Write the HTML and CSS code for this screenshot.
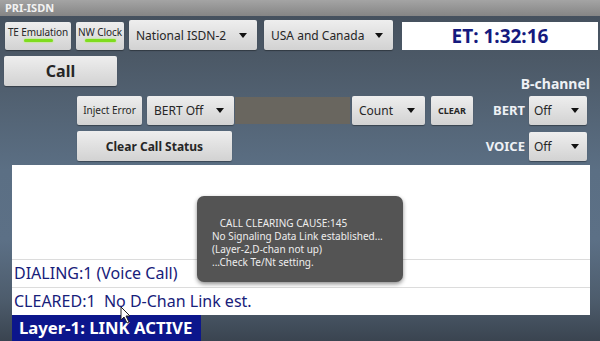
FILE: index.html
```html
<!DOCTYPE html>
<html>
<head>
<meta charset="utf-8">
<link rel="stylesheet" href="styles.css">
</head>
<body>
<div class="app">
  <div class="titlebar">PRI-ISDN</div>
  <div class="top-row">
    <div class="btn toggle te">TE Emulation<span class="led"></span></div>
    <div class="btn toggle nw">NW Clock<span class="led"></span></div>
    <div class="btn spinner national"><span>National ISDN-2</span><span class="arrow"></span></div>
    <div class="btn spinner usa"><span>USA and Canada</span><span class="arrow"></span></div>
    <div class="et">ET: 1:32:16</div>
  </div>
  <div class="call-row">
    <div class="btn call">Call</div>
    <div class="bchan">B-channel</div>
  </div>
  <div class="ctl-row r3">
    <div class="btn inject">Inject Error</div>
    <div class="btn spinner bert"><span>BERT Off</span><span class="arrow"></span></div>
    <div class="graybox"></div>
    <div class="btn spinner count"><span>Count</span><span class="arrow"></span></div>
    <div class="btn clear">CLEAR</div>
    <div class="label">BERT</div>
    <div class="btn spinner off"><span>Off</span><span class="arrow"></span></div>
  </div>
  <div class="ctl-row r4">
    <div class="btn ccs">Clear Call Status</div>
    <div class="label">VOICE</div>
    <div class="btn spinner off"><span>Off</span><span class="arrow"></span></div>
  </div>
  <div class="log">
    <div class="log-space"></div>
    <div class="log-line">DIALING:1 (Voice Call)</div>
    <div class="log-line">CLEARED:1&nbsp; No D-Chan Link est.</div>
  </div>
  <div class="banner">Layer-1: LINK ACTIVE</div>
  <div class="toast">&nbsp;&nbsp;&nbsp;CALL CLEARING CAUSE:145<br>No Signaling Data Link established...<br>(Layer-2,D-chan not up)<br>...Check Te/Nt setting.</div>
  <svg class="cursor" width="12" height="18" viewBox="0 0 12 18"><path d="M1 1 L1 14 L4 11 L7 17 L9 16 L6 10 L10 10 Z" fill="#fff" stroke="#222" stroke-width="1"/></svg>
</div>
</body>
</html>
```

FILE: styles.css
```css
html, body { margin: 0; padding: 0; }
.app {
  position: relative;
  width: 600px;
  height: 341px;
  overflow: hidden;
  font-family: "Noto Sans", "Open Sans", sans-serif;
  background: linear-gradient(to bottom, #434e5b 0px, #4c5967 60px, #5b6f84 170px, #5c7086 240px, #4d5c6c 300px, #3a4450 341px);
}
.titlebar {
  height: 16px;
  line-height: 16px;
  padding-left: 5px;
  font-size: 11px;
  font-weight: bold;
  color: #f2f2f2;
  background: linear-gradient(to bottom, #a4a4a4, #858585);
}
.btn {
  box-sizing: border-box;
  display: flex;
  align-items: center;
  justify-content: center;
  background: linear-gradient(to bottom, #eeeeee, #d2d2d2);
  border-radius: 2px;
  color: #262626;
  box-shadow: 0 1px 1px rgba(0,0,0,0.35);
  white-space: nowrap;
}
.spinner { justify-content: space-between; padding: 0 10px 0 7px; }
.arrow {
  width: 0; height: 0;
  border-left: 4px solid transparent;
  border-right: 4px solid transparent;
  border-top: 5px solid #111;
}
.top-row {
  display: flex;
  align-items: flex-end;
  height: 30px;
  padding: 4px 0 0 5px;
}
.toggle {
  position: relative;
  height: 28px;
  font-size: 10px;
  letter-spacing: -0.1px;
  padding-bottom: 8px;
}
.led {
  position: absolute;
  bottom: 8px;
  height: 3px;
  border-radius: 2px;
  background: #7fdc1e;
  box-shadow: 0 0 2px #9cff30;
}
.te { width: 66px; }
.te .led { left: 19px; width: 29px; }
.nw { width: 48px; margin-left: 5px; }
.nw .led { left: 9px; width: 31px; }
.national { width: 128px; height: 30px; margin-left: 5px; font-size: 12px; }
.usa { width: 129px; height: 30px; margin-left: 7px; font-size: 12px; }
.et {
  width: 196px;
  height: 28px;
  margin-left: 9px;
  background: #fff;
  color: #151a7e;
  font-weight: bold;
  font-size: 19px;
  line-height: 28px;
  text-align: center;
}
.call-row {
  display: flex;
  justify-content: space-between;
  align-items: flex-end;
  height: 37px;
  margin-top: 6px;
  padding: 0 10px 0 4px;
}
.call {
  align-self: flex-start;
  width: 113px;
  height: 30px;
  font-size: 16px;
  font-weight: bold;
}
.bchan {
  color: #eef1f5;
  font-size: 14px;
  font-weight: bold;
  line-height: 18px;
}
.ctl-row {
  display: flex;
  align-items: center;
  padding: 0 13px 0 77px;
}
.r3 { height: 30px; margin-top: 2px; }
.r4 { height: 30px; margin-top: 6px; }
.inject { width: 65px; height: 29px; font-size: 10px; }
.bert { width: 87px; height: 29px; margin-left: 5px; font-size: 12px; }
.graybox { width: 115px; height: 27px; margin-left: 1px; background: #69665f; }
.count { width: 73px; height: 29px; margin-left: 2px; font-size: 12px; }
.clear { width: 42px; height: 29px; margin-left: 6px; font-size: 9px; font-weight: bold; }
.label {
  flex: 1;
  text-align: right;
  padding-right: 4px;
  color: #eef1f5;
  font-size: 13px;
  font-weight: bold;
}
.off { width: 58px; height: 29px; font-size: 12px; padding: 0 8px 0 5px; }
.ccs { width: 155px; height: 30px; font-size: 12px; font-weight: bold; }
.log {
  display: flex;
  flex-direction: column;
  width: 578px;
  height: 150px;
  margin: 4px 0 0 12px;
  background: #fff;
}
.log-space { flex: 1; }
.log-line {
  height: 27px;
  line-height: 27px;
  border-top: 1px solid #dcdcdc;
  padding-left: 2px;
  color: #17207a;
  font-size: 16px;
}
.banner {
  width: 182px;
  height: 26px;
  margin-left: 12px;
  padding-left: 7px;
  line-height: 26px;
  background: #0c168c;
  color: #fff;
  font-weight: bold;
  font-size: 16.7px;
  white-space: nowrap;
}
.toast {
  position: absolute;
  left: 197px;
  top: 196px;
  width: 206px;
  height: 86px;
  box-sizing: border-box;
  padding: 21px 0 0 15px;
  border-radius: 7px;
  background: #545454;
  box-shadow: 0 2px 4px rgba(0,0,0,0.45);
  color: #eeeeee;
  font-size: 10px;
  line-height: 13px;
}
.cursor { position: absolute; left: 120px; top: 306px; }
```
